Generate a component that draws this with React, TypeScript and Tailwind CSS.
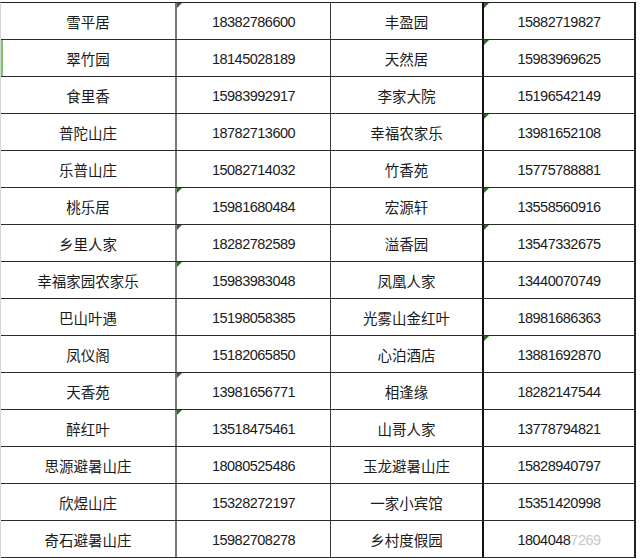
import React from 'react'

type Row = { a: string; an: string; b: string; bn: string; markA?: boolean; markB?: boolean }

const rows: Row[] = [
  { a: '雪平居', an: '18382786600', b: '丰盈园', bn: '15882719827', markA: true, markB: true },
  { a: '翠竹园', an: '18145028189', b: '天然居', bn: '15983969625', markB: true },
  { a: '食里香', an: '15983992917', b: '李家大院', bn: '15196542149' },
  { a: '普陀山庄', an: '18782713600', b: '幸福农家乐', bn: '13981652108', markB: true },
  { a: '乐普山庄', an: '15082714032', b: '竹香苑', bn: '15775788881' },
  { a: '桃乐居', an: '15981680484', b: '宏源轩', bn: '13558560916', markA: true, markB: true },
  { a: '乡里人家', an: '18282782589', b: '溢香园', bn: '13547332675', markA: true, markB: true },
  { a: '幸福家园农家乐', an: '15983983048', b: '凤凰人家', bn: '13440070749', markA: true },
  { a: '巴山叶遇', an: '15198058385', b: '光雾山金红叶', bn: '18981686363' },
  { a: '凤仪阁', an: '15182065850', b: '心泊酒店', bn: '13881692870', markB: true },
  { a: '天香苑', an: '13981656771', b: '相逢缘', bn: '18282147544', markA: true },
  { a: '醉红叶', an: '13518475461', b: '山哥人家', bn: '13778794821', markA: true },
  { a: '思源避暑山庄', an: '18080525486', b: '玉龙避暑山庄', bn: '15828940797' },
  { a: '欣煜山庄', an: '15328272197', b: '一家小宾馆', bn: '15351420998' },
  { a: '奇石避暑山庄', an: '15982708278', b: '乡村度假园', bn: '1804048' },
]

const cjk = "font-['Noto_Sans_CJK_SC',sans-serif] text-[14.5px] pt-[2px]"
const num = "font-['Liberation_Sans',Arial,sans-serif] text-[14.5px] tracking-[-0.5px] pt-[4px]"

function Mark() {
  return (
    <span className="absolute left-0 top-0 h-0 w-0 border-r-[5px] border-t-[5px] border-r-transparent border-t-[#2f6b2a]" />
  )
}

export default function App() {
  return (
    <div className="h-[558px] w-[640px] overflow-hidden bg-white text-[#1a1a1a]">
      <div className="mt-[2px] w-fit border-l border-t border-l-[#d4d4d4] border-t-[#222]">
        {rows.map((r, i) => (
          <div
            key={i}
            className="grid h-[37px] grid-cols-[176px_154px_153px_152px] border-b border-[#2a2a2a]"
          >
            <div
              className={`relative flex items-center justify-center border-r-2 border-[#7a7a7a] ${cjk} ${
                i === 1 ? 'shadow-[inset_2px_0_0_#7cc36a]' : ''
              }`}
            >
              {r.a}
            </div>
            <div className={`relative flex items-center justify-center border-r border-[#3a3a3a] ${num}`}>
              {r.markA && <Mark />}
              {r.an}
            </div>
            <div className={`relative flex items-center justify-center border-r-2 border-[#111] ${cjk}`}>
              {r.b}
            </div>
            <div className={`relative flex items-center justify-center border-r-2 border-[#222] ${num}`}>
              {r.markB && <Mark />}
              {r.bn}
              {i === 14 && <span className="text-[#c8c8c8]">7269</span>}
            </div>
          </div>
        ))}
      </div>
    </div>
  )
}
